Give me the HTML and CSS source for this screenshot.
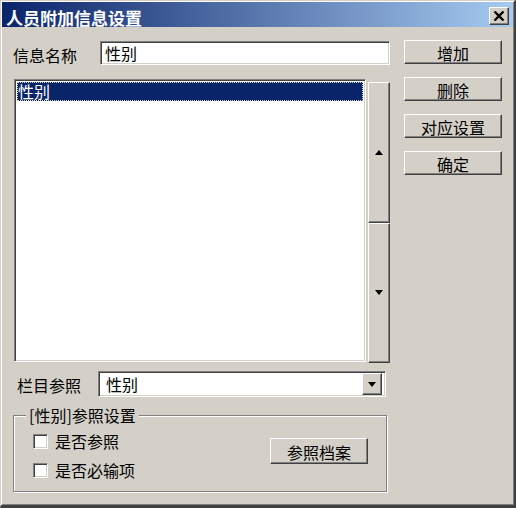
FILE: index.html
```html
<!DOCTYPE html>
<html lang="zh-CN">
<head>
<meta charset="utf-8">
<title>人员附加信息设置</title>
<link rel="stylesheet" href="styles.css">
</head>
<body>
<div class="window">
  <div class="titlebar">
    <span class="title">人员附加信息设置</span>
    <div class="close raised">
      <svg width="12" height="10" viewBox="0 0 12 10"><path d="M1.5 0.5 L10.5 9.5 M10.5 0.5 L1.5 9.5" stroke="#000" stroke-width="2.4" fill="none"/></svg>
    </div>
  </div>
  <div class="content">
    <div class="left">
      <div class="name-row">
        <span class="lbl">信息名称</span>
        <div class="field sunken name-input">性别</div>
      </div>
      <div class="list-row">
        <div class="listbox sunken">
          <div class="item selected">性别</div>
        </div>
        <div class="spin">
          <div class="spin-btn raised"><span class="arrow up"></span></div>
          <div class="spin-btn raised"><span class="arrow down"></span></div>
        </div>
      </div>
      <div class="combo-row">
        <span class="lbl2">栏目参照</span>
        <div class="combo sunken">
          <span class="combo-text">性别</span>
          <div class="drop raised"><span class="arrow down"></span></div>
        </div>
      </div>
      <fieldset class="group">
        <legend class="legend">[性别]参照设置</legend>
        <div class="group-body">
          <div class="checks">
            <div class="check"><span class="box"></span><span>是否参照</span></div>
            <div class="check"><span class="box"></span><span>是否必输项</span></div>
          </div>
          <div class="btn raised ref-btn">参照档案</div>
        </div>
      </fieldset>
    </div>
    <div class="right">
      <div class="btn raised">增加</div>
      <div class="btn raised">删除</div>
      <div class="btn raised">对应设置</div>
      <div class="btn raised">确定</div>
    </div>
  </div>
</div>
</body>
</html>
```
FILE: styles.css
```css
body {
  margin: 0;
  background: #d4d0c8;
  font-family: "Noto Sans CJK SC", "Noto Sans", sans-serif;
  font-size: 16px;
  color: #000;
}

.window {
  width: 516px;
  height: 508px;
  box-sizing: border-box;
  border-style: solid;
  border-width: 1px 2px 3px 1px;
  border-color: #d4d0c8 #404040 #404040 #d4d0c8;
  box-shadow: inset 1px 1px 0 #fff, inset -1px -1px 0 #808080;
  padding: 1px;
  background: #d4d0c8;
}

.titlebar {
  height: 25px;
  display: flex;
  justify-content: space-between;
  align-items: flex-start;
  background: linear-gradient(to right, #0a246a, #a6caf0);
  padding: 0 4px 0 4px;
}

.title {
  color: #fff;
  font-weight: bold;
  font-size: 17px;
  line-height: 17px;
  padding-top: 7px;
}

.raised {
  box-sizing: border-box;
  background: #d4d0c8;
  border: 1px solid;
  border-color: #fff #404040 #404040 #fff;
  box-shadow: inset -1px -1px 0 #808080;
}

.sunken {
  box-sizing: border-box;
  background: #fff;
  border: 1px solid;
  border-color: #808080 #fff #fff #808080;
  box-shadow: inset 1px 1px 0 #404040, inset -1px -1px 0 #d4d0c8;
}

.close {
  width: 20px;
  height: 18px;
  margin-top: 5px;
  display: flex;
  align-items: center;
  justify-content: center;
}

.close svg {
  display: block;
}

.content {
  display: flex;
  padding: 13px 0 0 11px;
}

.left {
  width: 377px;
}

.right {
  margin-left: 14px;
  display: flex;
  flex-direction: column;
  gap: 13px;
}

.btn {
  width: 98px;
  height: 24px;
  display: flex;
  align-items: center;
  justify-content: center;
  line-height: 16px;
  padding-top: 1px;
}

.name-row {
  margin-top: 1px;
  display: flex;
  align-items: center;
  height: 24px;
}

.lbl {
  width: 87px;
  line-height: 16px;
  padding-top: 4px;
}

.name-input {
  width: 290px;
  height: 24px;
  line-height: 20px;
  padding: 1px 4px;
}

.list-row {
  margin-top: 14px;
  display: flex;
  align-items: flex-start;
}

.listbox {
  width: 352px;
  height: 283px;
  margin-left: 1px;
  padding: 2px;
}

.item {
  height: 19px;
  line-height: 17px;
  box-sizing: border-box;
  padding-left: 0;
}

.selected {
  background: #0a246a;
  color: #fff;
  border: 1px dotted #d8d8b0;
}

.spin {
  margin-left: 2px;
  margin-top: 3px;
  width: 22px;
  height: 281px;
  display: flex;
  flex-direction: column;
}

.spin-btn {
  flex: 1;
  display: flex;
  align-items: center;
  justify-content: center;
}

.arrow {
  width: 0;
  height: 0;
  border-left: 4px solid transparent;
  border-right: 4px solid transparent;
}

.arrow.up {
  border-bottom: 5px solid #000;
}

.arrow.down {
  border-top: 5px solid #000;
}

.combo-row {
  margin-top: 8px;
  display: flex;
  align-items: center;
  height: 26px;
}

.lbl2 {
  width: 81px;
  padding-left: 4px;
  line-height: 16px;
  padding-top: 1px;
}

.combo {
  width: 288px;
  height: 26px;
  display: flex;
  align-items: center;
  justify-content: space-between;
  padding: 2px;
}

.combo-text {
  padding-left: 5px;
  line-height: 16px;
}

.drop {
  width: 20px;
  height: 22px;
  display: flex;
  align-items: center;
  justify-content: center;
  margin-right: 1px;
}

.group {
  margin: 10px 0 0 0;
  width: 374px;
  box-sizing: border-box;
  border: 1px solid #808080;
  box-shadow: inset 1px 1px 0 #fff, 1px 1px 0 #fff;
  padding: 0;
  min-inline-size: 0;
}

.legend {
  margin-left: 12px;
  padding: 0 3px;
  line-height: 16px;
  background: #d4d0c8;
}

.group-body {
  display: flex;
  justify-content: space-between;
  align-items: flex-start;
  padding: 10px 18px 13px 19px;
}

.checks {
  display: flex;
  flex-direction: column;
  gap: 13px;
}

.check {
  display: flex;
  align-items: center;
  height: 16px;
  line-height: 16px;
}

.box {
  width: 15px;
  height: 15px;
  box-sizing: border-box;
  background: #fff;
  border: 1px solid;
  border-color: #808080 #fff #fff #808080;
  box-shadow: inset 1px 1px 0 #404040, inset -1px -1px 0 #d4d0c8;
  margin-right: 7px;
}

.ref-btn {
  height: 26px;
  margin-top: 5px;
}
```
